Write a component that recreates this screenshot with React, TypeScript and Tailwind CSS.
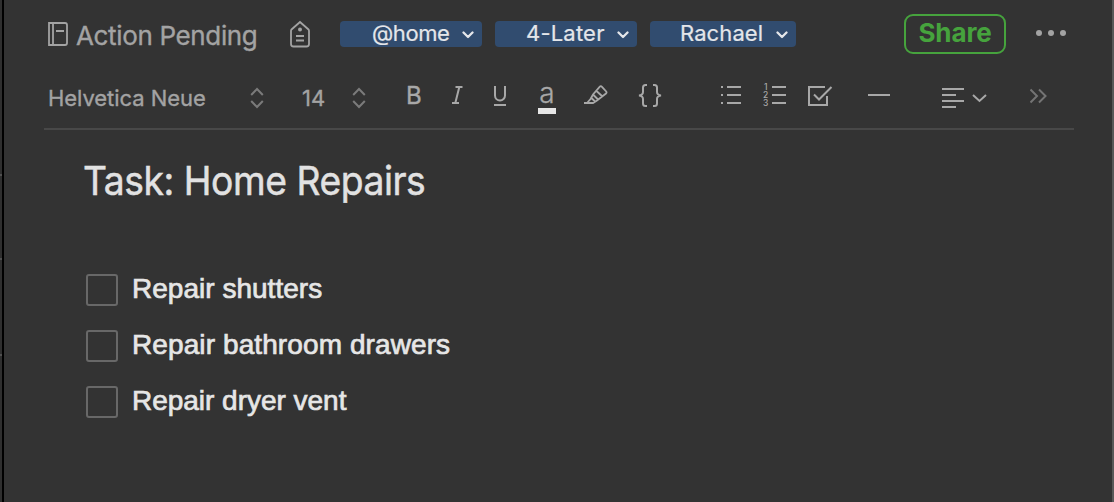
import React from "react";

const inter = "font-['Inter','Liberation_Sans',sans-serif]";

function Stepper({ className }: { className: string }) {
  return (
    <svg viewBox="0 0 14 22" className={`h-[22px] w-[14px] shrink-0 fill-none stroke-[#7b7b7b] stroke-2 ${className}`}>
      <path d="M1.2 8 7 2l5.800 6M1.200 14 7 20l5.800-6" />
    </svg>
  );
}

function Chip({ label, width, text }: { label: string; width: string; text: string }) {
  return (
    <button className={`flex h-[26px] shrink-0 items-center justify-between rounded-[4px] bg-[#314c6f] pr-[8px] ${width}`}>
      <span className={`-mt-[2px] whitespace-nowrap text-[22px] leading-[24px] text-[#e4e6ea] [-webkit-text-stroke:0.2px_#e4e6ea] ${text}`}>{label}</span>
      <svg viewBox="0 0 12 8" className="mt-px h-[8px] w-[12px] shrink-0 fill-none stroke-[#e4e6ea] stroke-[2.3]">
        <path d="m1.500 1.500 4.500 4.500 4.500-4.500" strokeLinecap="round" strokeLinejoin="round" />
      </svg>
    </button>
  );
}

function Header() {
  return (
    <header className="flex h-[68px] items-center pl-[44px]">
      <svg viewBox="0 0 20 24" className="h-[24px] w-[20px] shrink-0 fill-none stroke-[#a3a3a3] stroke-2">
        <path d="M1 1h16q2 0 2 2v18q0 2-2 2H1ZM5 1v22M8 9h8" strokeWidth="1.800" />
      </svg>
      <h2 className="ml-[8px] mt-[4px] w-[212px] shrink-0 whitespace-nowrap text-[26px] leading-[32px] tracking-[-0.35px] text-[#a3a3a3] [-webkit-text-stroke:0.35px_#a3a3a3]">
        Action Pending
      </h2>
      <svg viewBox="0 0 22 28" className="ml-px h-[28px] w-[22px] shrink-0 fill-none stroke-[#a3a3a3] stroke-2">
        <path d="M11 2 2.500 9.500Q2 10 2 11v13q0 2.500 2.500 2.500h13Q20 26.500 20 24V11q0-1-.5-1.500ZM7 16h8M7 20.500h8" strokeWidth="1.800" />
        <circle cx="11" cy="9.500" r="2" className="fill-[#a3a3a3] stroke-none" />
      </svg>
      <div className="ml-[29px] flex shrink-0 gap-[13px]">
        <Chip label="@home" width="w-[142px]" text="pl-[32px] tracking-[-0.4px]" />
        <Chip label="4-Later" width="w-[142px]" text="pl-[31px] tracking-[0.2px]" />
        <Chip label="Rachael" width="w-[146px]" text="pl-[30px] tracking-[0.1px]" />
      </div>
      <button className="ml-[108px] flex h-[40px] w-[102px] shrink-0 items-center justify-center rounded-[9px] border-2 border-[#46a33d] pb-[3px] text-[26px] font-bold leading-[30px] tracking-[-0.1px] text-[#46a33d]">
        Share
      </button>
      <svg viewBox="0 0 32 8" className="ml-[29px] h-[8px] w-[32px] shrink-0 fill-[#a3a3a3]">
        <circle cx="4" cy="3" r="3" />
        <circle cx="16" cy="3" r="3" />
        <circle cx="28" cy="3" r="3" />
      </svg>
    </header>
  );
}

function Toolbar() {
  const stroke = "shrink-0 fill-none stroke-[#a8a8a8] stroke-2";
  return (
    <div className="ml-[40px] flex h-[62px] w-[1030px] items-start border-b-2 border-[#484848] pl-[4px] pt-[16px] text-[#a8a8a8]">
      <span className="mt-[3px] w-[202px] shrink-0 whitespace-nowrap text-[22px] leading-[22px] tracking-[-0.05px] text-[#a3a3a3] [-webkit-text-stroke:0.35px_#a3a3a3]">Helvetica Neue</span>
      <Stepper className="mt-[3px]" />
      <span className="ml-[38px] mt-[3px] w-[50px] shrink-0 text-[22px] leading-[22px] text-[#a3a3a3] [-webkit-text-stroke:0.35px_#a3a3a3]">14</span>
      <Stepper className="mt-[3px]" />
      <span className="ml-[40px] w-[45px] shrink-0 text-[24px] leading-[24px] [-webkit-text-stroke:0.4px_#a8a8a8]">B</span>
      <svg viewBox="0 0 14 22" className={`h-[22px] w-[14px] ${stroke}`}>
        <path d="M4.500 3h7M1 19h7M8.300 3l-4 16" />
      </svg>
      <svg viewBox="0 0 16 24" className={`ml-[27px] h-[24px] w-[16px] ${stroke}`}>
        <path d="M3 2v9.500a5 5 0 0 0 10 0V2M2 21h12" />
      </svg>
      <span className="ml-[30px] flex w-[18px] shrink-0 flex-col items-center">
        <span className="h-[24px] text-[28px] font-light leading-[19px] [-webkit-text-stroke:0.3px_#a8a8a8]">a</span>
        <span className="h-[6px] w-[18px] bg-[#e6e6e6]" />
      </span>
      <svg viewBox="0 0 24 22" className={`ml-[28px] h-[22px] w-[24px] ${stroke}`}>
        <path d="M0 19h9l4-2.500 9-7q1-1 .2-2L18 2.800q-1.200-1.200-2.400 0L9 10.500 6.500 15 3 19M9 10.500l5.500 5.500M7 13.500l4.500 4.500M12.500 7l6 5.500" strokeWidth="1.800" />
      </svg>
      <svg viewBox="0 0 24 24" className={`ml-[30px] h-[24px] w-[24px] ${stroke}`}>
        <path d="M9 1H7.500Q5 1 5 3.500V8q0 3-4 3.500 4 .5 4 3.500v4.500Q5 22 7.500 22H9M15 1h1.500Q19 1 19 3.500V8q0 3 4 3.500-4 .5-4 3.500v4.500q0 2.500-2.500 2.500H15" />
      </svg>
      <svg viewBox="0 0 20 22" className={`ml-[59px] h-[22px] w-[20px] ${stroke}`}>
        <path d="M6 3h14M6 11h14M6 19h14M0 3h2M0 11h2M0 19h2" />
      </svg>
      <svg viewBox="0 0 24 24" className={`ml-[22px] h-[24px] w-[24px] overflow-visible ${stroke}`}>
        <path d="M9 3h14M9 11h14M9 19h14" />
        <g className="fill-[#a8a8a8] stroke-none text-[8.500px] font-medium">
          <text x="1" y="6">1</text>
          <text x="0" y="14">2</text>
          <text x="0" y="22">3</text>
        </g>
      </svg>
      <svg viewBox="0 0 26 24" className={`ml-[20px] h-[24px] w-[26px] ${stroke}`}>
        <path d="M18 3H2v18h18V12M7 10.500l5 5L24.500 3" />
      </svg>
      <svg viewBox="0 0 22 22" className={`ml-[35px] h-[22px] w-[22px] ${stroke}`}>
        <path d="M0 11h22" />
      </svg>
      <svg viewBox="0 0 46 24" className={`ml-[52px] h-[24px] w-[46px] ${stroke}`}>
        <path d="M0 5h22M0 11h14M0 17h22M0 23h14M31 11l6.500 6L44 11" />
      </svg>
      <svg viewBox="0 0 18 22" className="ml-[42px] h-[22px] w-[18px] shrink-0 fill-none stroke-[#747474] stroke-2">
        <path d="m.500 5.500 6.500 6.500-6.500 6.500M9 5.500l6.500 6.500L9 18.500" />
      </svg>
    </div>
  );
}

const tasks = [
  { label: "Repair shutters", tracking: "tracking-[0.02px]" },
  { label: "Repair bathroom drawers", tracking: "tracking-[0.1px]" },
  { label: "Repair dryer vent", tracking: "tracking-[-0.02px]" },
];

export default function App() {
  return (
    <div className={`flex h-[502px] w-[1114px] overflow-hidden bg-[#333333] ${inter}`}>
      <div className="flex w-[4px] shrink-0 flex-col border-r-2 border-black bg-[#2f2f2f]">
        <div className="mt-[174px] h-[2px] bg-[#505050]" />
        <div className="mt-[82px] h-[2px] bg-[#505050]" />
        <div className="mt-[94px] h-[2px] bg-[#505050]" />
      </div>
      <main className="w-[1108px] shrink-0">
        <Header />
        <Toolbar />
        <h1 className="ml-[79px] mt-[26px] origin-left scale-x-[0.932] whitespace-nowrap text-[40px] leading-[49px] tracking-[-0.5px] text-[#e2e2e2] [-webkit-text-stroke:0.5px_#e2e2e2]">Task: Home Repairs</h1>
        <ul className="ml-[82px] mt-[69px] flex flex-col gap-[24px] font-['Liberation_Sans',Arial,sans-serif]">
          {tasks.map((task) => (
            <li key={task.label} className="flex h-[32px] items-start">
              <span className="h-[32px] w-[32px] shrink-0 rounded-[3px] border-2 border-[#686868]" />
              <span className={`ml-[14px] mt-px whitespace-nowrap text-[28px] leading-[28px] text-[#e6e6e6] [-webkit-text-stroke:0.7px_#e6e6e6] ${task.tracking}`}>{task.label}</span>
            </li>
          ))}
        </ul>
      </main>
      <div className="w-[2px] shrink-0 bg-[#585858]" />
    </div>
  );
}
